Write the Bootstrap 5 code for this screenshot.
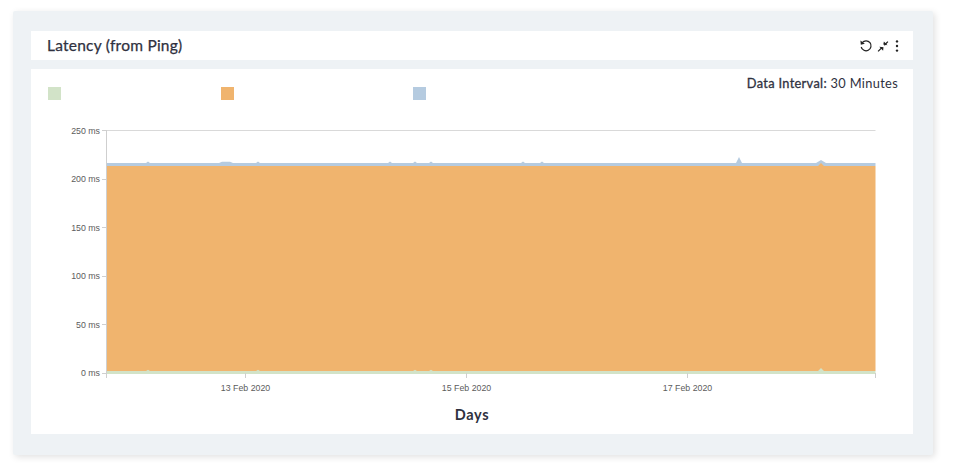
<!DOCTYPE html>
<html lang="en">
<head>
<meta charset="utf-8">
<title>Latency (from Ping)</title>
<link href="https://cdn.jsdelivr.net/npm/bootstrap@5.3.0/dist/css/bootstrap.min.css" rel="stylesheet">
<style>
html,body{background:#fff;height:475px;overflow:hidden}
body{font-family:"Lato","Liberation Sans",sans-serif;color:#2f3140}
.shell{width:920px;height:444px;margin:11px 0 0 13px;background:#eef2f5;padding:20px 20px 21px 18px;box-shadow:2px 2px 7px rgba(0,0,0,.12);border-radius:2px}
.head-strip{height:29px;padding:0 13px 0 16px;margin-bottom:9px;border:0;border-radius:0}
.head-title{font-size:15.5px;font-weight:400;letter-spacing:.24px;margin:0;line-height:29px;-webkit-text-stroke:.25px #2f3140}
.tool-ico{display:block}
.body-panel{height:365px;border:0;border-radius:0;padding:0}
.legend-row{height:51px;padding:18px 15px 0 17px}
.swatch{width:12.5px;height:12.5px;display:block;flex:none}
.sw-green{background:#d2e3c8;margin-right:160.5px}
.sw-orange{background:#f0b46e;margin-right:179.5px}
.sw-blue{background:#b5cbe0}
.interval{font-size:12.8px;letter-spacing:.33px;line-height:1;margin-top:-10.5px}
.interval b{font-weight:400;-webkit-text-stroke:.3px #2f3140}
.chart{display:block}
.axis-y{font:8.8px "Liberation Sans",sans-serif;fill:#5c5c5c;text-anchor:end}
.axis-x{font:8.8px "Liberation Sans",sans-serif;fill:#5c5c5c;text-anchor:middle}
.axis-title{font:700 14.5px "Lato","Liberation Sans",sans-serif;fill:#2f3140;text-anchor:middle;letter-spacing:.6px}
</style>
</head>
<body>
<div class="shell d-flex flex-column">
  <div class="card head-strip flex-row align-items-center justify-content-between">
    <h2 class="head-title">Latency (from Ping)</h2>
    <svg class="tool-ico" width="42" height="16" viewBox="0 0 42 16" aria-hidden="true">
      <g transform="translate(1 0)">
        <path d="M3.2 4.6A5 5 0 1 1 2.2 9" fill="none" stroke="#222" stroke-width="1.2"/>
        <path d="M1.4 2.4l.4 4.3 4-1z" fill="#222"/>
      </g>
      <g transform="translate(2.5 0)">
        <path d="M17.6 13.4l4-4M27.4 3.6l-3.6 3.6" stroke="#222" stroke-width="1.3"/>
        <path d="M23 9.2l-4.2-.4 3.8 4zM22.8 6.6l4.2.6-3.6-3.8z" fill="#222"/>
      </g>
      <circle cx="39" cy="3.4" r="1.2" fill="#222"/><circle cx="39" cy="8" r="1.2" fill="#222"/><circle cx="39" cy="12.6" r="1.2" fill="#222"/>
    </svg>
  </div>
  <div class="card body-panel">
    <div class="legend-row d-flex align-items-start">
      <span class="swatch sw-green"></span>
      <span class="swatch sw-orange"></span>
      <span class="swatch sw-blue"></span>
      <div class="interval ms-auto"><b>Data Interval:</b> 30 Minutes</div>
    </div>
    <svg class="chart" width="882" height="314" viewBox="31 120 882 314">
      <line x1="107" y1="130.5" x2="875.5" y2="130.5" stroke="#d9d9d9"/>
      <line x1="106.5" y1="130" x2="106.5" y2="378" stroke="#cfcfcf"/>
      <line x1="107" y1="373.5" x2="875.5" y2="373.5" stroke="#cfcfcf"/>
      <path d="M107 163H146L148 161.5L150 163H219L222 161.7H230L233 163H256L258 161.5L260 163H388L390 161.5L392 163H413L415 161.5L417 163H429L431 161.5L433 163H521L523 161.5L525 163H540L542 161.5L544 163H736L739 157L742 163H816L821 160L826 163H875.5V166H107Z" fill="#b5cbe0"/>
      <path d="M107 166H818L821 163L824 166H875.5V371H107Z" fill="#f0b46e"/>
      <path d="M107 371H146L148 369.8L150 371H256L258 369.8L260 371H413L415 369.8L417 371H429L431 369.8L433 371H818L821 368L824 371H875.5V374H107Z" fill="#d2e3c8"/>
      <path d="M102 130.5h5M102 179.5h5M102 227.5h5M102 276.5h5M102 324.5h5M102 373.5h5" stroke="#cfcfcf"/>
      <path d="M245.5 373v5M466.5 373v5M687.5 373v5M875.5 373v5" stroke="#cfcfcf"/>
      <text class="axis-y" x="100" y="133.5">250 ms</text>
      <text class="axis-y" x="100" y="182">200 ms</text>
      <text class="axis-y" x="100" y="230.5">150 ms</text>
      <text class="axis-y" x="100" y="279">100 ms</text>
      <text class="axis-y" x="100" y="327.5">50 ms</text>
      <text class="axis-y" x="100" y="376">0 ms</text>
      <text class="axis-x" x="245.5" y="391">13 Feb 2020</text>
      <text class="axis-x" x="466.5" y="391">15 Feb 2020</text>
      <text class="axis-x" x="687.5" y="391">17 Feb 2020</text>
      <text class="axis-title" x="472" y="420">Days</text>
    </svg>
  </div>
</div>
<script src="https://cdn.jsdelivr.net/npm/bootstrap@5.3.0/dist/js/bootstrap.bundle.min.js"></script>
</body>
</html>
